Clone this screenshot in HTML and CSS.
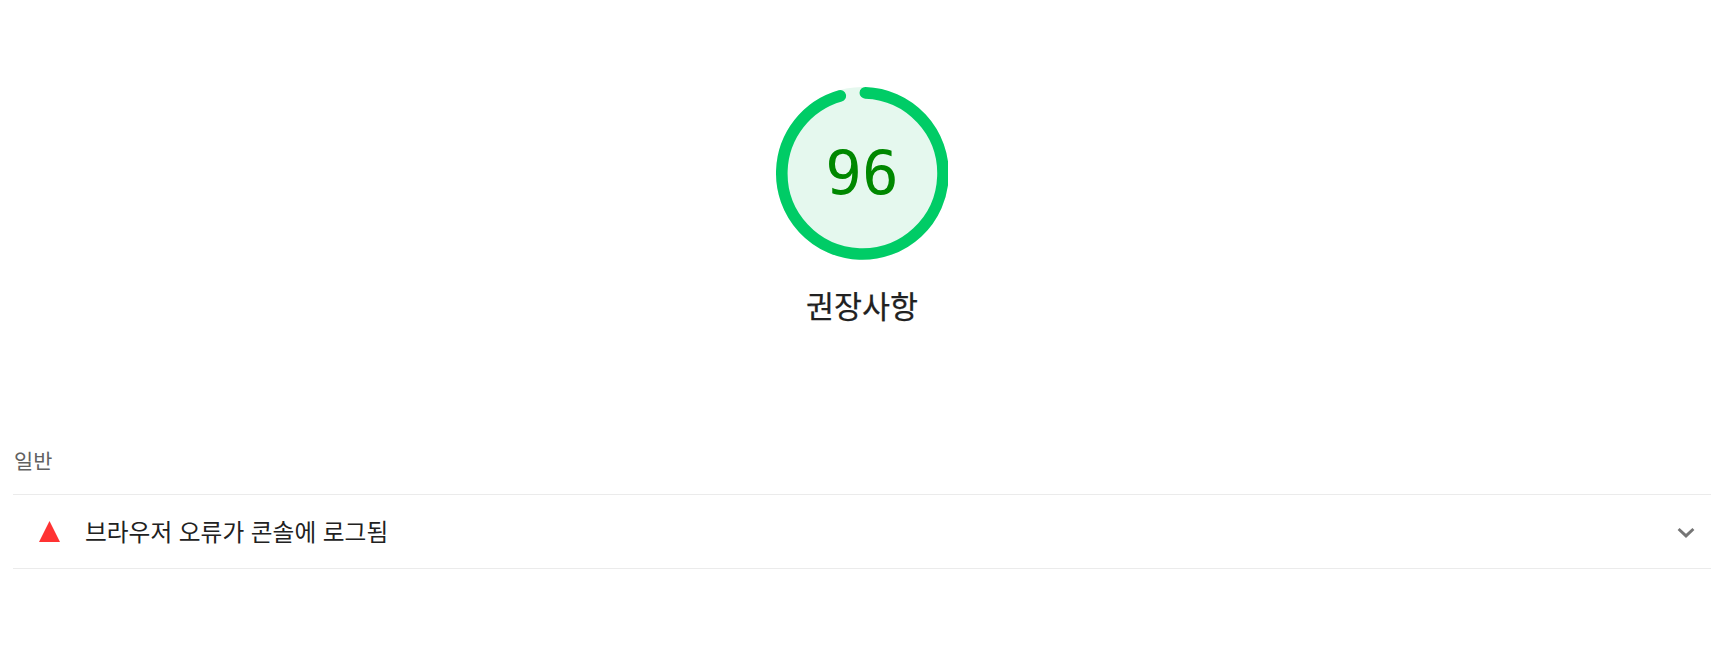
FILE: index.html
```html
<!DOCTYPE html>
<html lang="ko">
<head>
<meta charset="utf-8">
<title>권장사항</title>
<link rel="stylesheet" href="styles.css">
</head>
<body>
<main class="category">
  <header class="gauge">
    <div class="gauge-dial">
      <svg class="gauge-svg" viewBox="0 0 172 174">
        <circle class="gauge-base" cx="86.4" cy="86.4" r="80.6"/>
        <circle class="gauge-arc" cx="86.4" cy="86.4" r="80.6" pathLength="360" stroke-dasharray="341.9 360" transform="rotate(-87.9 86.4 86.4)"/>
      </svg>
      <span class="gauge-score">96</span>
    </div>
    <h1 class="gauge-label">권장사항</h1>
  </header>
  <section class="group">
    <h2 class="group-title">일반</h2>
    <div class="audit">
      <svg class="audit-icon" viewBox="0 0 22 22"><path d="M10.5 0 21 21H0z"/></svg>
      <span class="audit-title">브라우저 오류가 콘솔에 로그됨</span>
      <svg class="chevron" viewBox="0 0 18 12"><path d="M1.6 3 9 9.9 16.4 3"/></svg>
    </div>
  </section>
</main>
</body>
</html>
```
FILE: styles.css
```css
body {
  margin: 0;
  background: #fff;
  color: #212121;
  font-family: "Noto Sans CJK KR", sans-serif;
}

.category {
  padding: 87px 11px 0 13px;
}

.gauge {
  display: flex;
  flex-direction: column;
  align-items: center;
  width: 1698px;
}

.gauge-dial {
  display: grid;
  place-items: center;
  width: 172px;
  height: 174px;
}

.gauge-svg,
.gauge-score {
  grid-area: 1 / 1;
}

.gauge-svg {
  width: 172px;
  height: 174px;
}

.gauge-base {
  fill: #e5f8ee;
  stroke: #e5f8ee;
  stroke-width: 11.6;
}

.gauge-arc {
  fill: none;
  stroke: #0c6;
  stroke-width: 11.6;
  stroke-linecap: round;
}

.gauge-score {
  padding-bottom: 2px;
  color: #080;
  font: 61px/72px "DejaVu Sans Mono", monospace;
}

.gauge-label {
  margin: 21px 0 0;
  font-size: 30.4px;
  font-weight: 400;
  line-height: 46px;
  -webkit-text-stroke: 0.25px currentColor;
}

.group {
  margin-top: 117px;
}

.group-title {
  height: 49px;
  margin: 0;
  padding-left: 1px;
  color: #616161;
  font-size: 20.8px;
  font-weight: 400;
  line-height: 30px;
}

.audit {
  display: flex;
  align-items: center;
  height: 73px;
  padding: 0 16px 0 26px;
  border: solid #ebebeb;
  border-width: 1px 0;
}

.audit-icon {
  width: 22px;
  height: 22px;
  fill: #f33;
}

.audit-title {
  flex: 1;
  margin-left: 24px;
  padding-bottom: 2px;
  font-size: 23.7px;
  line-height: 36px;
}

.chevron {
  width: 18px;
  height: 12px;
  fill: none;
  stroke: #757575;
  stroke-width: 2.9;
}
```
